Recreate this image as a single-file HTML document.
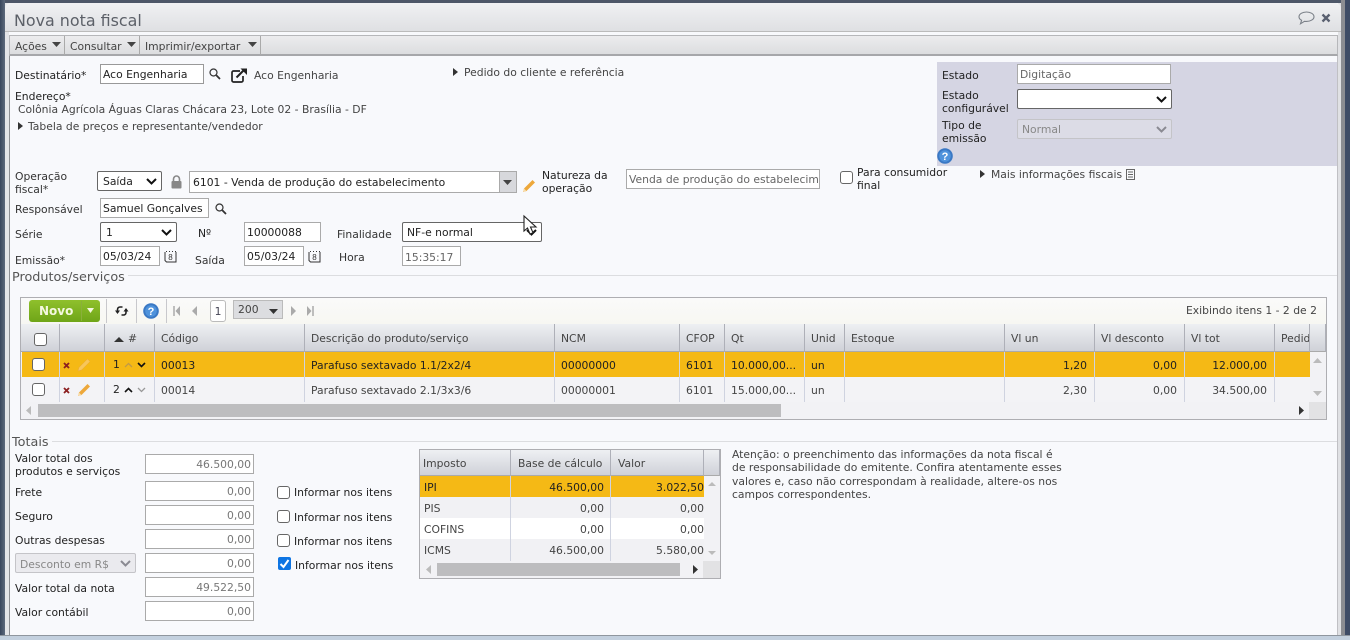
<!DOCTYPE html>
<html lang="pt"><head><meta charset="utf-8"><title>Nova nota fiscal</title>
<style>
*{box-sizing:border-box}
html,body{margin:0;padding:0;width:1350px;height:640px;overflow:hidden;background:#f8f9fc}
body{position:relative;font-family:"DejaVu Sans","Liberation Sans",sans-serif;font-size:10.78px;color:#222}
.a{position:absolute;white-space:nowrap;line-height:13px}
.i{position:absolute;background:#fff;border:1px solid #aaa;line-height:19px;padding:0 2px;white-space:nowrap;overflow:hidden;color:#222}
.r{text-align:right;color:#444}
.s{position:absolute;background:#fff;border:1px solid #666;border-radius:2px;padding:0 5px;line-height:19px;white-space:nowrap}
.s svg,.d svg{position:absolute;right:4px;top:5px}
.d{position:absolute;background:#e9e9ee;border:1px solid #c4c4c8;border-radius:2px;padding:0 4px;color:#888;line-height:19px;white-space:nowrap}
.c{position:absolute;width:13px;height:13px;background:#fff;border:1px solid #666;border-radius:3px}
.tri{position:absolute;width:0;height:0;border-left:5px solid #333;border-top:4px solid transparent;border-bottom:4px solid transparent}
.h{position:absolute;background:linear-gradient(#eef0f3,#cfd1d8);border-right:1px solid #aeb0b8;border-bottom:1px solid #aaa;line-height:30px;padding-left:6px;color:#444;white-space:nowrap;overflow:hidden}
.cell{position:absolute;line-height:28px;padding-left:6px;border-right:1px solid #cfd3e0;white-space:nowrap;overflow:hidden;color:#222}
.cr{text-align:right;padding:0 7px 0 0}
.ln{position:absolute;height:1px;background:#dcdde0}
svg{position:absolute;overflow:visible}
</style></head><body>

<!-- frame -->
<div style="position:absolute;left:0;top:0;width:1350px;height:3px;background:#4d5768"></div>
<div style="position:absolute;left:0;top:0;width:5px;height:635px;background:linear-gradient(90deg,#39475d,#5d6a7c)"></div>
<div style="position:absolute;left:5px;top:3px;width:4px;height:632px;background:#e4e5e8"></div>
<div style="position:absolute;left:9px;top:55px;width:1px;height:580px;background:#8d8f93"></div>
<div style="position:absolute;left:1337px;top:55px;width:1px;height:580px;background:#c0c0c4"></div>
<div style="position:absolute;left:1338px;top:3px;width:3px;height:632px;background:#e0e1e4"></div>
<div style="position:absolute;left:1341px;top:0;width:4px;height:635px;background:#8b8d92"></div>
<div style="position:absolute;left:1345px;top:0;width:5px;height:635px;background:#3e4c66"></div>
<div style="position:absolute;left:0;top:635px;width:1350px;height:5px;background:#c3d0de;border-top:1px solid #8f969e"></div>

<!-- title bar -->
<div style="position:absolute;left:5px;top:3px;width:1336px;height:29px;background:linear-gradient(#f0f1f3,#dfe0e3);border-bottom:1px solid #bbb;border-radius:5px 5px 0 0"></div>
<div class="a" style="left:14px;top:12px;font-size:15.900px;line-height:18px;color:#5c6068">Nova nota fiscal</div>
<svg style="left:1298px;top:11px" width="17" height="15" viewBox="0 0 17 15"><path d="M8.500 1C4.500 1 1 3 1 5.700c0 1.600 1 2.800 2.600 3.600L2.500 12.800 6.500 10.300c.7.100 1.300.100 2 .100 4 0 7.500-2 7.500-4.700S12.500 1 8.500 1z" fill="none" stroke="#7b8088" stroke-width="1.100"/></svg>
<svg style="left:1321px;top:13px" width="10" height="10" viewBox="0 0 10 10"><path d="M1.500 1.500l7 7M8.500 1.500l-7 7" stroke="#5a6070" stroke-width="2.300"/></svg>

<!-- menu bar -->
<div style="position:absolute;left:9px;top:35px;width:1329px;height:21px;background:linear-gradient(#ececee,#dcdddf);border:1px solid #b6b7ba;border-bottom:2px solid #a6a7aa"></div>
<div style="position:absolute;left:64px;top:36px;width:1px;height:19px;background:#aaa"></div>
<div style="position:absolute;left:139px;top:36px;width:1px;height:19px;background:#aaa"></div>
<div style="position:absolute;left:260px;top:36px;width:1px;height:19px;background:#aaa"></div>
<div class="a" style="left:15px;top:40px;color:#444">Ações</div>
<div class="a" style="left:70px;top:40px;color:#444">Consultar</div>
<div class="a" style="left:145px;top:40px;color:#444">Imprimir/exportar</div>
<svg style="left:52px;top:42px" width="9" height="5"><path d="M0 0h9L4.500 5z" fill="#444"/></svg>
<svg style="left:127px;top:42px" width="9" height="5"><path d="M0 0h9L4.500 5z" fill="#444"/></svg>
<svg style="left:248px;top:42px" width="9" height="5"><path d="M0 0h9L4.500 5z" fill="#444"/></svg>

<!-- state panel -->
<div style="position:absolute;left:937px;top:62px;width:400px;height:104px;background:#d5d5e3"></div>
<div class="a" style="left:942px;top:69px">Estado</div>
<div class="i" style="left:1017px;top:64px;width:154px;height:20px;color:#666">Digitação</div>
<div class="a" style="left:942px;top:89px">Estado<br>configurável</div>
<div class="s" style="left:1017px;top:89px;width:155px;height:20px"><svg width="11" height="7" style="top:6px;right:4px"><path d="M1 1l4.500 4.500L10 1" fill="none" stroke="#111" stroke-width="2"/></svg></div>
<div class="a" style="left:942px;top:119px">Tipo de<br>emissão</div>
<div class="d" style="left:1017px;top:119px;width:155px;height:20px;background:#dcdce6;padding-left:4px">Normal<svg width="11" height="7" style="top:6px;right:4px"><path d="M1 1l4.500 4.500L10 1" fill="none" stroke="#8a8a92" stroke-width="2"/></svg></div>
<svg style="left:937px;top:148px" width="16" height="16" viewBox="0 0 16 16"><circle cx="8" cy="8" r="7.800" fill="#3a78c4"/><circle cx="8" cy="8" r="5.800" fill="#4f93dc"/><text x="8" y="12" font-size="11" font-weight="bold" text-anchor="middle" fill="#fff" font-family="Liberation Sans">?</text></svg>

<!-- customer -->
<div class="a" style="left:15px;top:69px">Destinatário*</div>
<div class="i" style="left:100px;top:64px;width:104px;height:20px;border-color:#999">Aco Engenharia</div>
<svg style="left:209px;top:68px" width="12" height="12" viewBox="0 0 12 12"><circle cx="4.500" cy="4.500" r="3.500" fill="none" stroke="#333" stroke-width="1.200"/><path d="M7.300 7.300L11 11" stroke="#333" stroke-width="1.800"/></svg>
<svg style="left:231px;top:68px" width="17" height="15" viewBox="0 0 17 15"><path d="M9 3H2.500A1.500 1.500 0 0 0 1 4.500v8A1.500 1.500 0 0 0 2.500 14h8a1.500 1.500 0 0 0 1.500-1.500V8" fill="none" stroke="#222" stroke-width="1.700"/><path d="M5.500 9.500L13 2" stroke="#222" stroke-width="2"/><path d="M9.500 0.500h6.500v6.500z" fill="#222"/></svg>
<div class="a" style="left:254px;top:69px;color:#444">Aco Engenharia</div>
<div class="tri" style="left:453px;top:68px"></div>
<div class="a" style="left:464px;top:66px;color:#444">Pedido do cliente e referência</div>
<div class="a" style="left:15px;top:90px">Endereço*</div>
<div class="a" style="left:18px;top:103px;color:#444">Colônia Agrícola Águas Claras Chácara 23, Lote 02 - Brasília - DF</div>
<div class="tri" style="left:18px;top:122px"></div>
<div class="a" style="left:28px;top:120px;color:#444">Tabela de preços e representante/vendedor</div>

<!-- operation -->
<div class="a" style="left:15px;top:170px;color:#333">Operação<br>fiscal*</div>
<div class="s" style="left:97px;top:171px;width:65px;height:20px">Saída<svg width="11" height="7" style="top:6px;right:4px"><path d="M1 1l4.500 4.500L10 1" fill="none" stroke="#111" stroke-width="2"/></svg></div>
<svg style="left:170px;top:175px" width="13" height="14" viewBox="0 0 13 14"><path d="M3.500 6V4a3 3 0 0 1 6 0v2" fill="none" stroke="#888" stroke-width="1.600"/><rect x="1.500" y="6" width="10" height="7.500" rx="1" fill="#888"/></svg>
<div class="i" style="left:189px;top:171px;width:328px;height:22px;line-height:21px;padding-left:3px">6101 - Venda de produção do estabelecimento</div>
<div style="position:absolute;left:499px;top:172px;width:17px;height:20px;background:#d7d8dc;border-left:1px solid #aaa"></div>
<svg style="left:503px;top:180px" width="9" height="5"><path d="M0 0h9L4.500 5z" fill="#444"/></svg>
<svg style="left:522px;top:179px" width="14" height="14" viewBox="0 0 14 14"><path d="M1 13l1-3.500L10.500 1 13 3.500 4.500 12z" fill="#eda83b"/><path d="M1 13l1-3.500 2.500 2.500z" fill="#f8dca8"/></svg>
<div class="a" style="left:542px;top:169px">Natureza da<br>operação</div>
<div class="i" style="left:626px;top:169px;width:194px;height:20px;color:#666">Venda de produção do estabelecimento</div>
<div class="c" style="left:840px;top:171px"></div>
<div class="a" style="left:857px;top:166px">Para consumidor<br>final</div>
<div class="tri" style="left:980px;top:170px"></div>
<div class="a" style="left:991px;top:168px;color:#444">Mais informações fiscais</div>
<svg style="left:1126px;top:169px" width="9" height="11" viewBox="0 0 9 11"><rect x=".5" y=".5" width="8" height="10" fill="none" stroke="#666"/><path d="M2 3h5M2 5.500h5M2 8h5" stroke="#666"/></svg>

<div class="a" style="left:15px;top:203px;color:#333">Responsável</div>
<div class="i" style="left:100px;top:198px;width:109px;height:20px;line-height:20px">Samuel Gonçalves</div>
<svg style="left:215px;top:203px" width="12" height="12" viewBox="0 0 12 12"><circle cx="4.500" cy="4.500" r="3.500" fill="none" stroke="#333" stroke-width="1.200"/><path d="M7.300 7.300L11 11" stroke="#333" stroke-width="1.800"/></svg>

<div class="a" style="left:15px;top:228px;color:#333">Série</div>
<div class="s" style="left:100px;top:222px;width:77px;height:20px">1<svg width="11" height="7" style="top:6px;right:4px"><path d="M1 1l4.500 4.500L10 1" fill="none" stroke="#111" stroke-width="2"/></svg></div>
<div class="a" style="left:198px;top:227px">Nº</div>
<div class="i" style="left:244px;top:222px;width:77px;height:20px;line-height:20px">10000088</div>
<div class="a" style="left:337px;top:228px;color:#333">Finalidade</div>
<div class="s" style="left:402px;top:222px;width:140px;height:20px;padding-left:4px">NF-e normal<svg width="11" height="7" style="top:6px;right:4px"><path d="M1 1l4.500 4.500L10 1" fill="none" stroke="#111" stroke-width="2"/></svg></div>

<div class="a" style="left:15px;top:254px;color:#333">Emissão*</div>
<div class="i" style="left:100px;top:246px;width:60px;height:20px">05/03/24</div>
<svg style="left:164px;top:250px" width="13" height="13" viewBox="0 0 13 13"><path d="M2 1.500h1M5 1.500h1M8 1.500h1M11 1.500h1" stroke="#333"/><path d="M1 2v8.500L2.500 12H12V2" fill="none" stroke="#333"/><text x="6.500" y="10" font-size="8" text-anchor="middle" fill="#333" font-family="Liberation Sans">8</text></svg>
<div class="a" style="left:195px;top:254px;color:#333">Saída</div>
<div class="i" style="left:244px;top:246px;width:60px;height:20px">05/03/24</div>
<svg style="left:308px;top:250px" width="13" height="13" viewBox="0 0 13 13"><path d="M2 1.500h1M5 1.500h1M8 1.500h1M11 1.500h1" stroke="#333"/><path d="M1 2v8.500L2.500 12H12V2" fill="none" stroke="#333"/><text x="6.500" y="10" font-size="8" text-anchor="middle" fill="#333" font-family="Liberation Sans">8</text></svg>
<div class="a" style="left:339px;top:251px;color:#333">Hora</div>
<div class="i" style="left:402px;top:246px;width:59px;height:20px;line-height:21px;color:#666">15:35:17</div>

<!-- cursor -->
<svg style="left:523px;top:215px;z-index:5" width="16" height="21" viewBox="0 0 16 21"><path d="M1 1v15l3.500-3 2.500 6 3-1.300-2.500-5.700H13z" fill="#fff" stroke="#222" stroke-width="1.100"/></svg>

<div class="a" style="left:12px;top:270px;font-size:12.800px;line-height:15px;color:#555">Produtos/serviços</div>
<div class="ln" style="left:128px;top:275px;width:1209px"></div>

<!-- grid -->
<div style="position:absolute;left:20px;top:297px;width:1307px;height:123px;border:1px solid #aeaeb2;background:#f2f2f5"></div>
<div style="position:absolute;left:21px;top:298px;width:1305px;height:26px;background:linear-gradient(#fafafa,#f7f7f2)"></div>
<div style="position:absolute;left:29px;top:300px;width:71px;height:22px;background:linear-gradient(#8fc02c,#6fa518);border-radius:3px"></div>
<div class="a" style="left:39px;top:305px;font-weight:bold;font-size:12px;color:#f4f8e0">Novo</div>
<div style="position:absolute;left:81px;top:301px;width:1px;height:20px;background:#8ab03a"></div>
<svg style="left:87px;top:308px" width="7" height="5"><path d="M0 0h7L3.500 5z" fill="#f4f8e0"/></svg>
<div style="position:absolute;left:106px;top:299px;width:1px;height:24px;background:#c8c8cc"></div>
<div style="position:absolute;left:136px;top:299px;width:1px;height:24px;background:#c8c8cc"></div>
<div style="position:absolute;left:166px;top:299px;width:1px;height:24px;background:#c8c8cc"></div>
<svg style="left:115px;top:305px" width="14" height="12" viewBox="0 0 14 12"><path d="M2.500 8V4.500A2.500 2.500 0 0 1 5 2h2.500M11 4v3.500A2.500 2.500 0 0 1 8.500 10H6.500" fill="none" stroke="#222" stroke-width="1.600"/><path d="M0 5.500h5L2.500 9zM8.500 6.500h5L11 3z" fill="#222"/></svg>
<svg style="left:143px;top:303px" width="16" height="16" viewBox="0 0 16 16"><circle cx="8" cy="8" r="7.800" fill="#3a78c4"/><circle cx="8" cy="8" r="5.800" fill="#4f93dc"/><text x="8" y="12" font-size="11" font-weight="bold" text-anchor="middle" fill="#fff" font-family="Liberation Sans">?</text></svg>
<svg style="left:173px;top:306px" width="8" height="10"><path d="M1 0v10" stroke="#aaa" stroke-width="1.500"/><path d="M7 0v10L2.500 5z" fill="#aaa"/></svg>
<svg style="left:191px;top:306px" width="7" height="10"><path d="M6 0v10L1 5z" fill="#aaa"/></svg>
<div style="position:absolute;left:210px;top:300px;width:16px;height:22px;background:#fff;border:1px solid #bbb;border-radius:3px;text-align:center;line-height:21px;color:#445">1</div>
<div style="position:absolute;left:233px;top:300px;width:50px;height:19px;background:#dcdde0;border:1px solid #bbb;line-height:17px;padding-left:4px;color:#444">200</div>
<svg style="left:269px;top:309px" width="9" height="5"><path d="M0 0h9L4.500 5z" fill="#333"/></svg>
<svg style="left:290px;top:306px" width="7" height="10"><path d="M1 0v10l5-5z" fill="#aaa"/></svg>
<svg style="left:306px;top:306px" width="8" height="10"><path d="M1 0v10l4.500-5z" fill="#aaa"/><path d="M7 0v10" stroke="#aaa" stroke-width="1.500"/></svg>
<div class="a" style="left:1186px;top:304px;color:#444">Exibindo itens 1 - 2 de 2</div>

<!-- grid header -->
<div class="h" style="left:21px;top:324px;width:39px;height:28px"></div>
<div class="c" style="left:34px;top:333px"></div>
<div class="h" style="left:60px;top:324px;width:45px;height:28px"></div>
<div class="h" style="left:105px;top:324px;width:50px;height:28px;padding-left:23px">#</div>
<svg style="left:114px;top:337px" width="10" height="5"><path d="M0 5h10L5 0z" fill="#333"/></svg>
<div class="h" style="left:155px;top:324px;width:150px;height:28px">Código</div>
<div class="h" style="left:305px;top:324px;width:250px;height:28px">Descrição do produto/serviço</div>
<div class="h" style="left:555px;top:324px;width:125px;height:28px">NCM</div>
<div class="h" style="left:680px;top:324px;width:45px;height:28px">CFOP</div>
<div class="h" style="left:725px;top:324px;width:80px;height:28px">Qt</div>
<div class="h" style="left:805px;top:324px;width:40px;height:28px">Unid</div>
<div class="h" style="left:845px;top:324px;width:160px;height:28px">Estoque</div>
<div class="h" style="left:1005px;top:324px;width:90px;height:28px">Vl un</div>
<div class="h" style="left:1095px;top:324px;width:90px;height:28px">Vl desconto</div>
<div class="h" style="left:1185px;top:324px;width:90px;height:28px">Vl tot</div>
<div class="h" style="left:1275px;top:324px;width:35px;height:28px">Pedid</div>
<div class="h" style="left:1310px;top:324px;width:16px;height:28px;padding:0"></div>

<!-- rows -->
<div style="position:absolute;left:22px;top:352px;width:1288px;height:25px;background:#f5b915"></div>
<div style="position:absolute;left:22px;top:377px;width:1288px;height:25px;background:#f3f3f6"></div>
<div class="c" style="left:32px;top:358px"></div>
<div class="c" style="left:32px;top:383px"></div>
<svg style="left:63px;top:362px" width="7" height="7"><path d="M1 1l5 5M6 1l-5 5" stroke="#8c2020" stroke-width="1.800"/></svg>
<svg style="left:63px;top:387px" width="7" height="7"><path d="M1 1l5 5M6 1l-5 5" stroke="#8c2020" stroke-width="1.800"/></svg>
<svg style="left:77px;top:358px" width="14" height="14" viewBox="0 0 14 14"><path d="M1 13l1-3.500L10.500 1 13 3.500 4.500 12z" fill="#f8c75a" stroke="#e8a840" stroke-width=".5"/></svg>
<svg style="left:77px;top:383px" width="14" height="14" viewBox="0 0 14 14"><path d="M1 13l1-3.500L10.500 1 13 3.500 4.500 12z" fill="#eda83b"/><path d="M1 13l1-3.500 2.500 2.500z" fill="#f8dca8"/></svg>
<div class="a" style="left:113px;top:358px">1</div>
<div class="a" style="left:113px;top:383px">2</div>
<svg style="left:124px;top:362px" width="9" height="6"><path d="M1 5l3.500-3.500L8 5" fill="none" stroke="#c09a48" stroke-width="1.300"/></svg>
<svg style="left:137px;top:362px" width="9" height="6"><path d="M1 1l3.500 3.500L8 1" fill="none" stroke="#111" stroke-width="1.600"/></svg>
<svg style="left:124px;top:387px" width="9" height="6"><path d="M1 5l3.500-3.500L8 5" fill="none" stroke="#111" stroke-width="1.600"/></svg>
<svg style="left:137px;top:387px" width="9" height="6"><path d="M1 1l3.500 3.500L8 1" fill="none" stroke="#999" stroke-width="1.300"/></svg>

<div class="ln" style="left:104px;top:352px;width:1px;height:50px;background:#cfd3e0"></div>
<div class="ln" style="left:59px;top:352px;width:1px;height:50px;background:#cfd3e0"></div>

<div class="cell" style="left:105px;top:352px;width:50px;height:25px"></div>
<div class="cell" style="left:155px;top:352px;width:150px;height:25px">00013</div>
<div class="cell" style="left:305px;top:352px;width:250px;height:25px">Parafuso sextavado 1.1/2x2/4</div>
<div class="cell" style="left:555px;top:352px;width:125px;height:25px">00000000</div>
<div class="cell" style="left:680px;top:352px;width:45px;height:25px">6101</div>
<div class="cell" style="left:725px;top:352px;width:80px;height:25px">10.000,00...</div>
<div class="cell" style="left:805px;top:352px;width:40px;height:25px">un</div>
<div class="cell" style="left:845px;top:352px;width:160px;height:25px"></div>
<div class="cell cr" style="left:1005px;top:352px;width:90px;height:25px">1,20</div>
<div class="cell cr" style="left:1095px;top:352px;width:90px;height:25px">0,00</div>
<div class="cell cr" style="left:1185px;top:352px;width:90px;height:25px">12.000,00</div>

<div class="cell" style="left:105px;top:377px;width:50px;height:25px"></div>
<div class="cell" style="left:155px;top:377px;width:150px;height:25px;color:#444">00014</div>
<div class="cell" style="left:305px;top:377px;width:250px;height:25px;color:#444">Parafuso sextavado 2.1/3x3/6</div>
<div class="cell" style="left:555px;top:377px;width:125px;height:25px;color:#444">00000001</div>
<div class="cell" style="left:680px;top:377px;width:45px;height:25px;color:#444">6101</div>
<div class="cell" style="left:725px;top:377px;width:80px;height:25px;color:#444">15.000,00...</div>
<div class="cell" style="left:805px;top:377px;width:40px;height:25px;color:#444">un</div>
<div class="cell" style="left:845px;top:377px;width:160px;height:25px"></div>
<div class="cell cr" style="left:1005px;top:377px;width:90px;height:25px;color:#444">2,30</div>
<div class="cell cr" style="left:1095px;top:377px;width:90px;height:25px;color:#444">0,00</div>
<div class="cell cr" style="left:1185px;top:377px;width:90px;height:25px;color:#444">34.500,00</div>

<svg style="left:1313px;top:358px" width="9" height="5"><path d="M0 5h9L4.500 0z" fill="#bbb"/></svg>
<svg style="left:1313px;top:391px" width="9" height="5"><path d="M0 0h9L4.500 5z" fill="#bbb"/></svg>
<div style="position:absolute;left:38px;top:404px;width:743px;height:13px;background:#bdbdbf"></div>
<svg style="left:26px;top:406px" width="6" height="9"><path d="M5 0v9L0 4.500z" fill="#bbb"/></svg>
<svg style="left:1299px;top:406px" width="6" height="9"><path d="M0 0v9l5-4.500z" fill="#333"/></svg>
<div style="position:absolute;left:1309px;top:402px;width:17px;height:17px;background:#e2e2e4"></div>

<!-- totals -->
<div class="a" style="left:12px;top:435px;font-size:12.800px;line-height:15px;color:#555">Totais</div>
<div class="ln" style="left:52px;top:441px;width:1285px"></div>
<div class="a" style="left:15px;top:452px">Valor total dos<br>produtos e serviços</div>
<div class="i r" style="left:145px;top:454px;width:109px;height:20px;color:#777">46.500,00</div>
<div class="a" style="left:15px;top:486px">Frete</div>
<div class="i r" style="left:145px;top:481px;width:109px;height:20px;color:#777">0,00</div>
<div class="a" style="left:15px;top:510px">Seguro</div>
<div class="i r" style="left:145px;top:505px;width:109px;height:20px;color:#777">0,00</div>
<div class="a" style="left:15px;top:534px">Outras despesas</div>
<div class="i r" style="left:145px;top:529px;width:109px;height:20px;color:#777">0,00</div>
<div class="d" style="left:15px;top:553px;width:121px;height:20px;line-height:21px;background:#eaeaee">Desconto em R$<svg width="11" height="7" style="top:6px;right:4px"><path d="M1 1l4.500 4.500L10 1" fill="none" stroke="#8a8a92" stroke-width="2"/></svg></div>
<div class="i r" style="left:145px;top:553px;width:109px;height:20px;color:#777">0,00</div>
<div class="a" style="left:15px;top:582px">Valor total da nota</div>
<div class="i r" style="left:145px;top:577px;width:109px;height:20px;color:#777">49.522,50</div>
<div class="a" style="left:15px;top:606px">Valor contábil</div>
<div class="i r" style="left:145px;top:601px;width:109px;height:20px;color:#777">0,00</div>

<div class="c" style="left:277px;top:486px"></div>
<div class="a" style="left:294px;top:486px">Informar nos itens</div>
<div class="c" style="left:277px;top:510px"></div>
<div class="a" style="left:294px;top:511px">Informar nos itens</div>
<div class="c" style="left:277px;top:534px"></div>
<div class="a" style="left:294px;top:535px">Informar nos itens</div>
<div style="position:absolute;left:278px;top:557px;width:13px;height:13px;background:#0e75e3;border-radius:2px"></div>
<svg style="left:278px;top:557px" width="13" height="13"><path d="M2.500 7l3 3 5-7" fill="none" stroke="#fff" stroke-width="2"/></svg>
<div class="a" style="left:295px;top:559px">Informar nos itens</div>

<!-- tax grid -->
<div style="position:absolute;left:419px;top:449px;width:302px;height:130px;border:1px solid #aeaeb2;background:#f2f2f5"></div>
<div class="h" style="left:420px;top:450px;width:91px;height:26px;line-height:28px;padding-left:3px">Imposto</div>
<div class="h" style="left:511px;top:450px;width:100px;height:26px;line-height:28px;padding-left:7px">Base de cálculo</div>
<div class="h" style="left:611px;top:450px;width:93px;height:26px;line-height:28px;padding-left:7px">Valor</div>
<div class="h" style="left:704px;top:450px;width:16px;height:26px;padding:0"></div>
<div style="position:absolute;left:420px;top:476px;width:284px;height:21px;background:#f5b915"></div>
<div style="position:absolute;left:420px;top:497px;width:284px;height:21px;background:#f1f1f4"></div>
<div style="position:absolute;left:420px;top:518px;width:284px;height:21px;background:#fff"></div>
<div style="position:absolute;left:420px;top:539px;width:284px;height:21px;background:#f1f1f4"></div>
<div class="ln" style="left:510px;top:476px;width:1px;height:85px;background:#cfd3e0"></div>
<div class="ln" style="left:610px;top:476px;width:1px;height:85px;background:#cfd3e0"></div>

<div class="a" style="left:424px;top:481px">IPI</div>
<div class="a" style="left:424px;top:502px;color:#444">PIS</div>
<div class="a" style="left:424px;top:523px;color:#444">COFINS</div>
<div class="a" style="left:424px;top:544px;color:#444">ICMS</div>
<div class="a" style="right:746px;top:481px">46.500,00</div>
<div class="a" style="right:746px;top:502px;color:#444">0,00</div>
<div class="a" style="right:746px;top:523px;color:#444">0,00</div>
<div class="a" style="right:746px;top:544px;color:#444">46.500,00</div>
<div class="a" style="right:646px;top:481px">3.022,50</div>
<div class="a" style="right:646px;top:502px;color:#444">0,00</div>
<div class="a" style="right:646px;top:523px;color:#444">0,00</div>
<div class="a" style="right:646px;top:544px;color:#444">5.580,00</div>

<svg style="left:708px;top:482px" width="8" height="4"><path d="M0 4h8L4 0z" fill="#bbb"/></svg>
<svg style="left:708px;top:551px" width="8" height="4"><path d="M0 0h8L4 4z" fill="#bbb"/></svg>
<div style="position:absolute;left:437px;top:563px;width:243px;height:13px;background:#bdbdbf"></div>
<svg style="left:426px;top:565px" width="6" height="9"><path d="M5 0v9L0 4.500z" fill="#bbb"/></svg>
<svg style="left:693px;top:565px" width="6" height="9"><path d="M0 0v9l5-4.500z" fill="#333"/></svg>
<div style="position:absolute;left:703px;top:561px;width:17px;height:17px;background:#e2e2e4"></div>

<div class="a" style="left:732px;top:448px;line-height:13.330px;color:#444">Atenção: o preenchimento das informações da nota fiscal é<br>de responsabilidade do emitente. Confira atentamente esses<br>valores e, caso não correspondam à realidade, altere-os nos<br>campos correspondentes.</div>

</body></html>
